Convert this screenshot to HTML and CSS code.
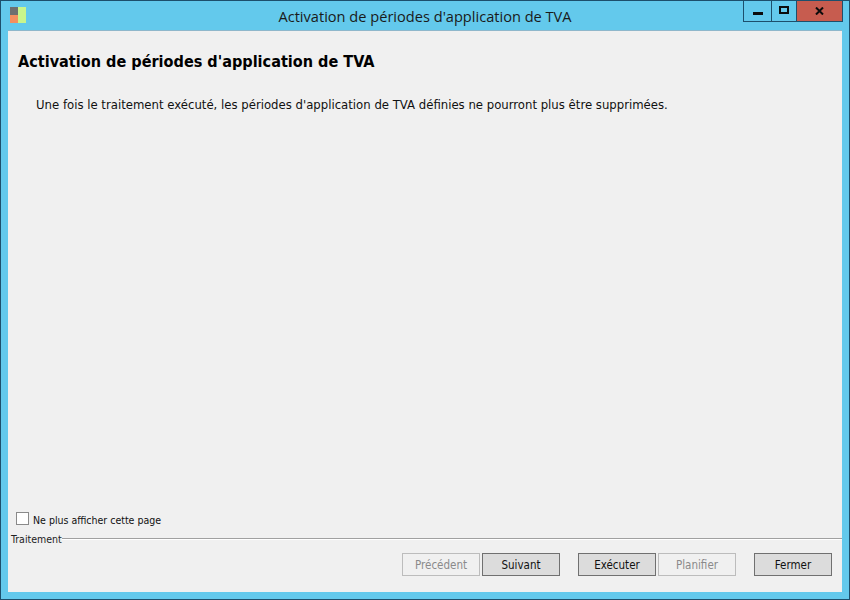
FILE: index.html
```html
<!DOCTYPE html>
<html lang="fr">
<head>
    <meta charset="UTF-8">
    <title>Activation de périodes d'application de TVA</title>
    <link rel="stylesheet" href="styles.css">
</head>
<body>
    <div class="window">
        <div class="titlebar">
            <svg class="app-icon" width="18" height="17" viewBox="0 0 18 17">
                <rect x="0" y="0" width="8" height="8" fill="#6f6f6f"/>
                <rect x="0" y="8" width="8" height="8" fill="#f58f5f"/>
                <rect x="8" y="0" width="8" height="16" fill="#c9f58c"/>
            </svg>
            <div class="title">Activation de périodes d'application de TVA</div>
            <div class="win-buttons">
                <div class="win-btn btn-min"><svg width="10" height="4" viewBox="0 0 10 4"><rect width="10" height="3" fill="#0c0c0c"/></svg></div>
                <div class="win-btn btn-max"><svg width="10" height="8" viewBox="0 0 10 8"><rect x="1" y="1" width="8" height="6" fill="none" stroke="#0c0c0c" stroke-width="2"/></svg></div>
                <div class="win-btn btn-close"><svg width="9" height="8" viewBox="0 0 9 8"><path d="M1 0.5 L8 7.5 M8 0.5 L1 7.5" fill="none" stroke="#0c0c0c" stroke-width="2"/></svg></div>
            </div>
        </div>
        <div class="client">
            <h1>Activation de périodes d'application de TVA</h1>
            <p class="message">Une fois le traitement exécuté, les périodes d'application de TVA définies ne pourront plus être supprimées.</p>
            <label class="hide-page">
                <span class="checkbox"></span>
                Ne plus afficher cette page
            </label>
            <div class="group-title">
                <span>Traitement</span>
                <div class="group-line"></div>
            </div>
            <div class="actions">
                <button class="disabled btn-prev">Précédent</button>
                <button class="btn-next">Suivant</button>
                <button class="btn-run">Exécuter</button>
                <button class="disabled">Planifier</button>
                <button class="btn-close-form">Fermer</button>
            </div>
        </div>
    </div>
</body>
</html>
```

FILE: styles.css
```css
html, body {
    margin: 0;
    height: 100%;
}
body {
    font-family: "DejaVu Sans Condensed", "DejaVu Sans", sans-serif;
    font-stretch: condensed;
    color: #111;
}
.window {
    box-sizing: border-box;
    width: 850px;
    height: 600px;
    background-color: #63c9ec;
    border: 1px solid #1d4f6c;
    padding: 0 7px 7px 7px;
    display: flex;
    flex-direction: column;
}
.titlebar {
    height: 29px;
    flex: none;
    display: flex;
    align-items: flex-start;
    position: relative;
}
.app-icon {
    margin: 6px 0 0 2px;
}
.title {
    position: absolute;
    left: 0;
    right: 0;
    top: 5px;
    text-align: center;
    font-family: "Open Sans", sans-serif;
    font-stretch: normal;
    font-size: 14.6px;
    line-height: 20px;
    color: #1a1a1a;
}
.win-buttons {
    margin-left: auto;
    margin-right: -1px;
    display: flex;
    height: 21px;
    position: relative;
    border: 1px solid #1d4f6c;
    border-top: none;
    box-sizing: border-box;
}
.win-btn {
    display: flex;
    align-items: center;
    justify-content: center;
    height: 20px;
}
.btn-min {
    width: 28px;
    border-right: 1px solid #1d4f6c;
    padding-top: 6px;
    box-sizing: border-box;
}
.btn-max {
    width: 25px;
    border-right: 1px solid #1d4f6c;
    padding-bottom: 2px;
    box-sizing: border-box;
}
.btn-close {
    width: 45px;
    background-color: #c75c4f;
}
.client {
    flex: 1;
    background-color: #f0f0f0;
    border-top: 1px solid #8fb7cb;
    display: flex;
    flex-direction: column;
    min-height: 0;
}
h1 {
    margin: 20px 0 0 10px;
    font-size: 16.1px;
    line-height: 22px;
    font-weight: bold;
    color: #000;
}
.message {
    margin: 24px 0 0 28px;
    font-size: 13px;
    line-height: 16px;
}
.hide-page {
    margin: auto 0 0 8px;
    display: flex;
    align-items: center;
    gap: 4px;
    font-size: 10.5px;
    line-height: 14px;
}
.checkbox {
    box-sizing: border-box;
    width: 13px;
    height: 13px;
    background-color: #fff;
    border: 1px solid #8a8a8a;
    margin-top: -3px;
}
.group-title {
    display: flex;
    align-items: center;
    margin: 5px 0 0 3px;
    font-size: 10.5px;
    line-height: 14px;
    color: #222;
}
.group-line {
    flex: 1;
    height: 1px;
    background-color: #a0a0a0;
    border-bottom: 1px solid #fff;
}
.actions {
    display: flex;
    justify-content: flex-end;
    margin: 7px 10px 16px 0;
}
button {
    box-sizing: border-box;
    width: 78px;
    height: 23px;
    padding: 0;
    font-family: inherit;
    font-stretch: inherit;
    font-size: 11.5px;
    color: #111;
    background-color: #dcdcdc;
    border: 1px solid #707070;
}
button.disabled {
    color: #8a8a8a;
    background-color: #f0f0f0;
    border-color: #bcbcbc;
}
.btn-prev {
    margin-right: 2px;
}
.btn-next {
    margin-right: 18px;
}
.btn-run {
    margin-right: 2px;
}
.btn-close-form {
    margin-left: 18px;
}
```
